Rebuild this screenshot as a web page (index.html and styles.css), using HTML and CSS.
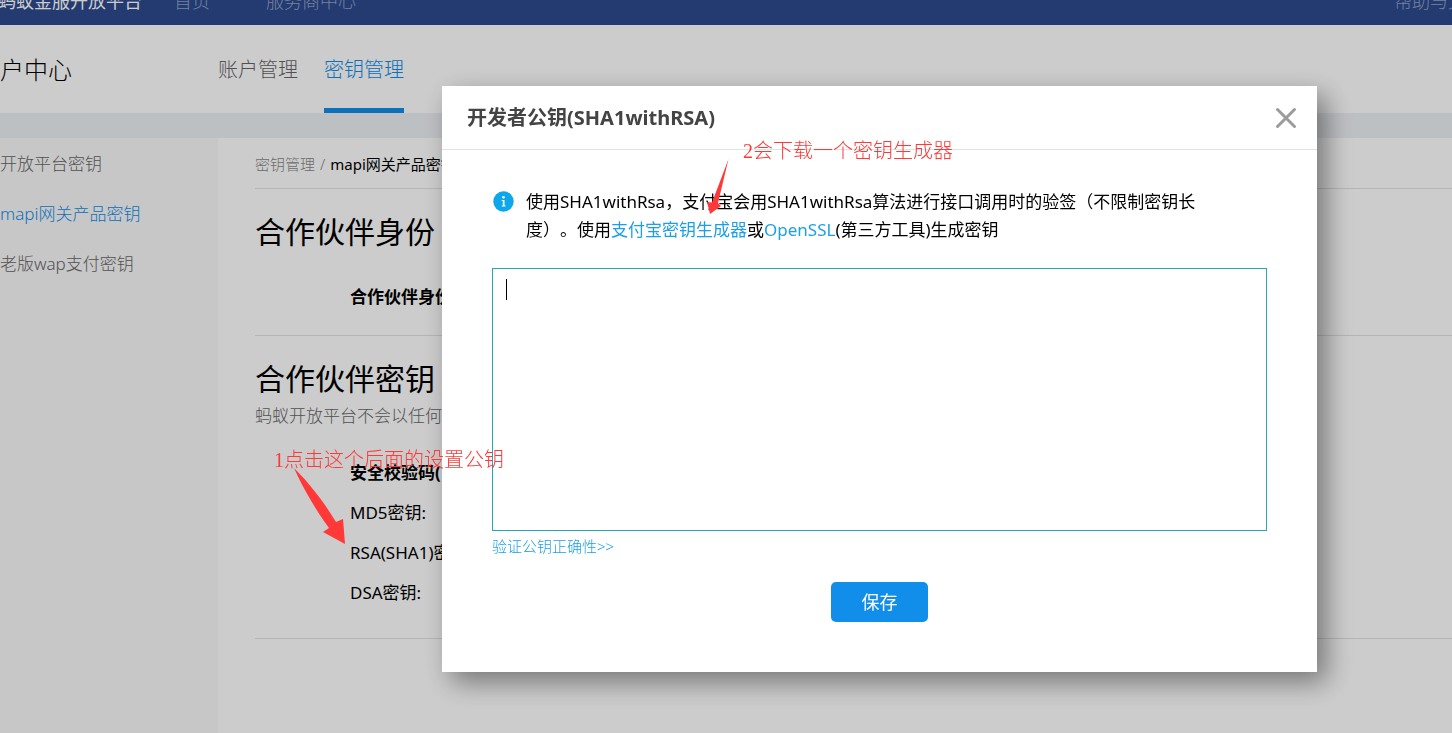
FILE: index.html
```html
<!DOCTYPE html>
<html lang="zh-CN">
<head>
<meta charset="utf-8">
<title>密钥管理</title>
<link rel="stylesheet" href="styles.css">
</head>
<body>
<div class="page">
  <header class="topbar">
    <a class="brand" href="#">蚂蚁金服开放平台</a>
    <nav class="topnav">
      <a href="#">首页</a>
      <a href="#">服务商中心</a>
    </nav>
    <a class="help" href="#">帮助与文</a>
  </header>
  <div class="subbar">
    <div class="center-title">账户中心</div>
    <nav class="tabs">
      <a class="tab" href="#">账户管理</a>
      <a class="tab active" href="#">密钥管理</a>
    </nav>
  </div>
  <div class="columns">
    <aside class="sidebar">
      <a href="#">开放平台密钥</a>
      <a class="active" href="#">mapi网关产品密钥</a>
      <a href="#">老版wap支付密钥</a>
    </aside>
    <main class="content">
      <div class="crumbs"><a href="#">密钥管理</a><span class="slash">/</span><span class="here">mapi网关产品密钥</span></div>
      <section class="block">
        <h2>合作伙伴身份</h2>
        <div class="rows partner"><strong>合作伙伴身份</strong></div>
      </section>
      <section class="block">
        <h2>合作伙伴密钥</h2>
        <p class="desc">蚂蚁开放平台不会以任何</p>
        <div class="rows keys">
          <strong>安全校验码(</strong>
          <span>MD5密钥:</span>
          <span>RSA(SHA1)密钥:</span>
          <span>DSA密钥:</span>
        </div>
      </section>
    </main>
  </div>
</div>

<div class="mask">
  <div class="dialog" role="dialog" aria-labelledby="dialog-title">
    <div class="dialog-head">
      <h1 id="dialog-title">开发者公钥(SHA1withRSA)</h1>
      <button class="close" type="button" aria-label="关闭">
        <svg viewBox="0 0 22 22" width="22" height="22"><path d="M2.500 2.500L19.500 19.500M19.500 2.500L2.500 19.500" stroke="#9b9b9b" stroke-width="3" stroke-linecap="round"/></svg>
      </button>
    </div>
    <form class="dialog-body">
      <div class="tip">
        <svg class="info" viewBox="0 0 21 21" width="21" height="21"><circle cx="10.500" cy="10.500" r="10.200" fill="#0ea8ea"/><circle cx="10.500" cy="6.300" r="1.300" fill="#fff"/><path d="M8.800 9h2.700v5.600h1v1H8.800v-1h1v-4.600h-1z" fill="#fff"/></svg>
        <label for="key">使用SHA1withRsa，支付宝会用SHA1withRsa算法进行接口调用时的验签（不限制密钥长度）。使用<a href="#">支付宝密钥生成器</a>或<a href="#">OpenSSL</a>(第三方工具)生成密钥</label>
      </div>
      <div class="field">
        <textarea id="key"></textarea>
        <span class="caret"></span>
      </div>
      <a class="verify" href="#">验证公钥正确性&gt;&gt;</a>
      <button class="save" type="button">保存</button>
    </form>
  </div>
</div>

<div class="note note-one">1点击这个后面的设置公钥</div>
<svg class="arrow arrow-one" viewBox="0 0 52 80" width="52" height="80"><path d="M0 0C14 14 28 31 42 54L49 51L51 76L29 64L35 60C22 42 10 22 0 0Z" fill="#ff3838"/></svg>
<div class="note note-two">2会下载一个密钥生成器</div>
<svg class="arrow arrow-two" viewBox="0 0 24 56" width="24" height="56"><path d="M21.500 0L11 44L14 47L3 55L0 43L5 43.500Z" fill="#ff3838"/></svg>
</body>
</html>
```
FILE: styles.css
```css
* { box-sizing: border-box; }
body {
  margin: 0;
  color: #000;
  font-family: "Noto Sans", "Noto Sans CJK SC", sans-serif;
  font-size: 17px;
  font-weight: 400;
  line-height: 28px;
  text-spacing-trim: space-all;
}
a { color: inherit; text-decoration: none; }
h1, h2, p { margin: 0; }
strong { font-weight: 700; }

.page {
  height: 100vh;
  overflow: hidden;
  display: flex;
  flex-direction: column;
  background: #fff;
}

.topbar {
  flex: none;
  height: 40px;
  margin-top: -15px;
  padding-top: 2px;
  display: flex;
  background: #2c4a8c;
  color: #93a3c8;
  font-size: 18px;
  font-weight: 300;
  white-space: nowrap;
}
.brand { width: 176px; margin-left: -2px; color: #fff; font-weight: 400; }
.topnav { flex: 1; display: flex; gap: 56px; }
.help { width: 58px; }

.subbar {
  flex: none;
  height: 88px;
  display: flex;
  background: #fff;
  font-weight: 300;
  line-height: 90px;
  white-space: nowrap;
}
.center-title { width: 242px; margin-left: -24px; font-size: 24px; }
.tabs { display: flex; gap: 26px; font-size: 20px; }
.tab { color: #666; }
.tab.active { color: #108ee9; border-bottom: 5px solid #108ee9; }

.columns {
  flex: 1;
  display: flex;
  border-top: 25px solid #edf0f4;
}
.sidebar {
  width: 218px;
  flex: none;
  display: flex;
  flex-direction: column;
  gap: 22px;
  padding-top: 12px;
  background: #f9f9fa;
  color: #666;
  font-weight: 300;
}
.sidebar .active { color: #108ee9; }
.content { flex: 1; min-width: 0; padding-left: 37px; }
.crumbs {
  height: 51px;
  padding-top: 12px;
  border-bottom: 1px solid #e3e3e3;
  font-size: 15px;
}
.crumbs a, .slash { color: #888; font-weight: 300; }
.slash { margin: 0 5px; }
.block { border-bottom: 1px solid #e3e3e3; padding-bottom: 24px; }
.block h2 {
  padding-top: 21px;
  font-size: 30px;
  line-height: 44px;
  font-weight: 400;
}
.rows { padding-left: 95px; display: flex; flex-direction: column; gap: 12px; }
.partner { padding-top: 29px; }
.desc { color: #666; font-weight: 300; line-height: 30px; }
.keys { padding-top: 28px; padding-bottom: 7px; }

.mask {
  position: fixed;
  inset: 0;
  display: flex;
  align-items: flex-start;
  padding: 86px 135px 0 442px;
  background: rgba(0, 0, 0, .2);
}
.dialog {
  flex: 1;
  background: #fff;
  box-shadow: 9px 10px 25px rgba(0, 0, 0, .42);
}
.dialog-head {
  display: flex;
  align-items: center;
  justify-content: space-between;
  height: 64px;
  padding: 0 20px 0 25px;
  border-bottom: 1px solid #e3e3e3;
}
.dialog-head h1 { font-size: 20px; font-weight: 700; color: #444; }
.close { display: flex; padding: 0; border: 0; background: none; }
.dialog-body {
  display: flex;
  flex-direction: column;
  align-items: flex-start;
  padding: 38px 50px 50px;
}
.tip { display: flex; gap: 12px; padding: 0 50px 24px 1px; }
.tip a, .verify { color: #1a9fe8; }
.info { flex: none; margin-top: 3px; }
.field { position: relative; width: 100%; }
textarea {
  display: block;
  width: 100%;
  height: 263px;
  padding: 10px 14px;
  border: 1px solid #26a5bd;
  outline: 0;
  resize: none;
  font: inherit;
}
.caret {
  position: absolute;
  left: 14px;
  top: 11px;
  width: 1px;
  height: 21px;
  background: #000;
}
.verify { margin: 1px 0 22px; font-size: 15px; font-weight: 300; }
.save {
  align-self: center;
  width: 97px;
  height: 40px;
  border: 0;
  border-radius: 5px;
  background: #108ee9;
  color: #fff;
  font: inherit;
  font-size: 18px;
}

.note {
  position: absolute;
  color: #ff3838;
  font-family: "Liberation Serif", "Noto Sans CJK SC", serif;
  font-size: 20px;
  font-weight: 300;
  white-space: nowrap;
}
.note-one { left: 274px; top: 446px; }
.note-two { left: 743px; top: 137px; }
.arrow { position: absolute; }
.arrow-one { left: 294px; top: 468px; }
.arrow-two { left: 707px; top: 159px; }
```
